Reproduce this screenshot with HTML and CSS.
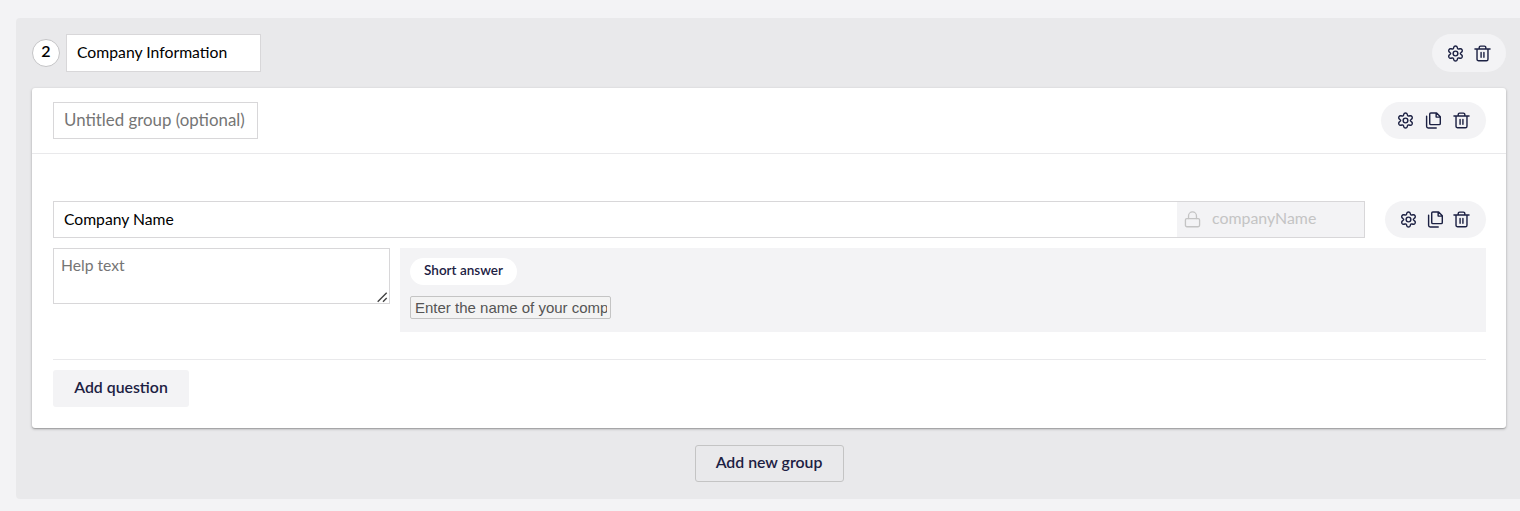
FILE: index.html
```
<!DOCTYPE html>
<html lang="en">
<head>
<meta charset="utf-8">
<title>Form designer</title>
<link rel="stylesheet" href="styles.css">
</head>
<body>
<svg class="sprite" aria-hidden="true">
  <symbol id="gear" viewBox="0 0 18 18">
    <path d="M7.200 2.300Q7.500 1 9 1t1.800 1.300l.3 1.200q.4 1 1.500.8l1.200-.3q1.400-.2 2.100.9.800 1.400-.2 2.400l-.8.700q-.8.600-.8 1t.8 1l.8.700q1 1 .2 2.400-.7 1.100-2.100.9l-1.200-.3q-1.100-.2-1.500.8l-.3 1.200Q10.500 17 9 17t-1.800-1.300l-.3-1.200q-.4-1-1.500-.8l-1.200.3q-1.400.2-2.100-.9-.8-1.400.2-2.400l.8-.7q.8-.6.800-1t-.8-1l-.8-.7q-1-1-.2-2.400.7-1.100 2.100-.9l1.200.3q1.100.2 1.500-.8z"/>
    <circle cx="9" cy="9" r="2.500"/>
  </symbol>
  <symbol id="copy" viewBox="0 0 18 18">
    <path d="M6.200 1h6.100l3.900 3.900v7.300a1.200 1.200 0 0 1-1.200 1.200H6.200A1.200 1.200 0 0 1 5 12.200v-10A1.200 1.200 0 0 1 6.200 1zM11.800 1.200v4.200H16M1.700 4.500v10.700a1.700 1.700 0 0 0 1.700 1.700h8.500"/>
  </symbol>
  <symbol id="trash" viewBox="0 0 18 18">
    <path d="M1 4.300h16M5.500 4.300V2.700a1.500 1.500 0 0 1 1.500-1.500h4a1.500 1.500 0 0 1 1.500 1.500v1.600M3.200 4.300V15a1.700 1.700 0 0 0 1.700 1.700h8.200a1.700 1.700 0 0 0 1.700-1.700V4.300M7.500 8v5M10.500 8v5"/>
  </symbol>
  <symbol id="lock" viewBox="0 0 18 18">
    <rect x="1.500" y="8" width="15" height="8.700" rx="1.500"/>
    <path d="M4.800 8V5.200a4.200 4.200 0 0 1 8.400 0V8"/>
  </symbol>
</svg>

<section class="page">
  <header class="page-header">
    <span class="page-number">2</span>
    <input class="field page-title" type="text" value="Company Information">
    <div class="actions actions-page">
      <svg class="icon"><use href="#gear"/></svg>
      <svg class="icon"><use href="#trash"/></svg>
    </div>
  </header>

  <div class="group">
    <header class="group-header">
      <input class="field group-title" type="text" placeholder="Untitled group (optional)">
      <div class="actions actions-group">
        <svg class="icon"><use href="#gear"/></svg>
        <svg class="icon"><use href="#copy"/></svg>
        <svg class="icon"><use href="#trash"/></svg>
      </div>
    </header>

    <div class="group-body">
      <div class="question-row">
        <div class="question-name">
          <input class="name-input" type="text" value="Company Name">
          <div class="alias">
            <svg class="icon"><use href="#lock"/></svg>
            <span class="alias-text">companyName</span>
          </div>
        </div>
        <div class="actions actions-question">
          <svg class="icon"><use href="#gear"/></svg>
          <svg class="icon"><use href="#copy"/></svg>
          <svg class="icon"><use href="#trash"/></svg>
        </div>
      </div>
      <div class="detail-row">
        <div class="help-box">
          <textarea class="help" placeholder="Help text"></textarea>
          <svg class="grip" viewBox="0 0 11 11"><path d="M.7 9.800 9.700.8M6 9.800l3.700-3.700"/></svg>
        </div>
        <div class="preview">
          <span class="type">Short answer</span>
          <input class="sample" type="text" placeholder="Enter the name of your company">
        </div>
      </div>
      <footer class="group-footer">
        <button class="button add-question">Add question</button>
      </footer>
    </div>
  </div>

  <button class="button add-group">Add new group</button>
</section>
</body>
</html>
```
FILE: styles.css
```
* {
  box-sizing: border-box;
}

body {
  margin: 0;
  padding: 18px 0 0 16px;
  height: 511px;
  overflow: hidden;
  background: #f3f3f5;
  color: #1c2143;
  font-family: Lato, sans-serif;
  font-size: 16px;
}

.sprite {
  display: none;
}

.page {
  display: flex;
  flex-direction: column;
  height: 481px;
  padding: 16px 14px 0 16px;
  border-radius: 4px 0 0 4px;
  background: #e9e9eb;
}

.page-header {
  display: flex;
  align-items: center;
  height: 38px;
  margin-bottom: 16px;
}

.page-number {
  width: 28px;
  height: 28px;
  margin-right: 6px;
  border: 1px solid #c4c4c6;
  border-radius: 50%;
  background: #fff;
  color: #000;
  font-weight: 600;
  line-height: 22px;
  text-align: center;
}

.field {
  height: 37px;
  margin: 0;
  padding: 0 10px 3px;
  border: 1px solid #d8d7d9;
  background: #fff;
  color: #000;
  font: 16.850px Lato, sans-serif;
}

.page-title {
  width: 195px;
  height: 38px;
  font-size: 15.750px;
}

.group-title {
  width: 205px;
}

.field::placeholder,
.help::placeholder {
  color: #757575;
}

.actions {
  display: flex;
  align-items: center;
  height: 37px;
  margin-left: auto;
  border-radius: 19px;
  background: #f3f3f5;
}

.actions-page {
  width: 74px;
  height: 37px;
  padding-left: 15.400px;
  gap: 10px;
  height: 38px;
}

.actions-group {
  width: 105px;
  padding-left: 16px;
  gap: 11px;
}

.actions-question {
  width: 101px;
  padding-left: 15.400px;
  gap: 9.500px;
}

.icon {
  flex: none;
  width: 17px;
  height: 17px;
  fill: none;
  stroke: currentColor;
  stroke-width: 1.500;
  stroke-linecap: round;
  stroke-linejoin: round;
}

.group {
  height: 340px;
  border-radius: 3px;
  background: #fff;
  box-shadow: 0 1px 3px rgba(0, 0, 0, 0.28), 0 1px 1px rgba(0, 0, 0, 0.14);
}

.group-header {
  display: flex;
  align-items: center;
  height: 66px;
  padding: 0 20px 0 21px;
  border-bottom: 1px solid #e9e9eb;
}

.group-body {
  padding: 47px 20px 0 21px;
}

.question-row {
  display: flex;
  gap: 20px;
}

.question-name {
  display: flex;
  flex: 1;
  height: 37px;
  border: 1px solid #d8d7d9;
}

.name-input {
  flex: 1;
  min-width: 0;
  padding: 0 10px 2px;
  border: 0;
  color: #000;
  font: 15.700px Lato, sans-serif;
}

.alias {
  display: flex;
  align-items: center;
  width: 187px;
  padding-left: 7px;
  gap: 11px;
  background: #f3f3f5;
  color: #c4c4c4;
}

.alias .icon {
  stroke-width: 1.400;
}

.alias-text {
  font-size: 15.900px;
  line-height: 20px;
  padding-bottom: 3px;
}

.detail-row {
  display: flex;
  align-items: flex-start;
  margin-top: 10px;
  gap: 10px;
}

.help-box {
  position: relative;
  width: 337px;
  height: 56px;
}

.help {
  display: block;
  width: 100%;
  height: 100%;
  padding: 7px 7px 5px;
  border: 1px solid #d8d7d9;
  font: 15.700px Lato, sans-serif;
  resize: none;
}

.grip {
  position: absolute;
  right: 2px;
  bottom: 1px;
  width: 11px;
  height: 11px;
  fill: none;
  stroke: #444;
  stroke-width: 1.400;
}

.preview {
  display: flex;
  flex: 1;
  flex-direction: column;
  align-items: flex-start;
  height: 84px;
  padding: 10px;
  background: #f3f3f5;
}

.type {
  width: 107px;
  height: 27px;
  border-radius: 14px;
  background: #fff;
  font-size: 13.500px;
  font-weight: 600;
  line-height: 25px;
  text-align: center;
}

.sample {
  width: 201px;
  height: 23px;
  margin-top: 11px;
  padding: 1px 3px 1px 4px;
  border: 1px solid #c4c4c4;
  border-radius: 2px;
  background: #f3f3f3;
  font: 15px "Liberation Sans", Arial, sans-serif;
}

.sample::placeholder {
  color: #555;
}

.group-footer {
  margin-top: 27px;
  padding-top: 10px;
  border-top: 1px solid #e9e9eb;
}

.button {
  height: 37px;
  padding: 0 0 5px;
  border: 0;
  border-radius: 3px;
  color: #1c2143;
  font: 600 15.850px Lato, sans-serif;
}

.add-question {
  width: 136px;
  background: #f3f3f5;
}

.add-group {
  align-self: center;
  width: 149px;
  margin-top: 17px;
  border: 1px solid #c4c4c4;
  background: transparent;
}
```
